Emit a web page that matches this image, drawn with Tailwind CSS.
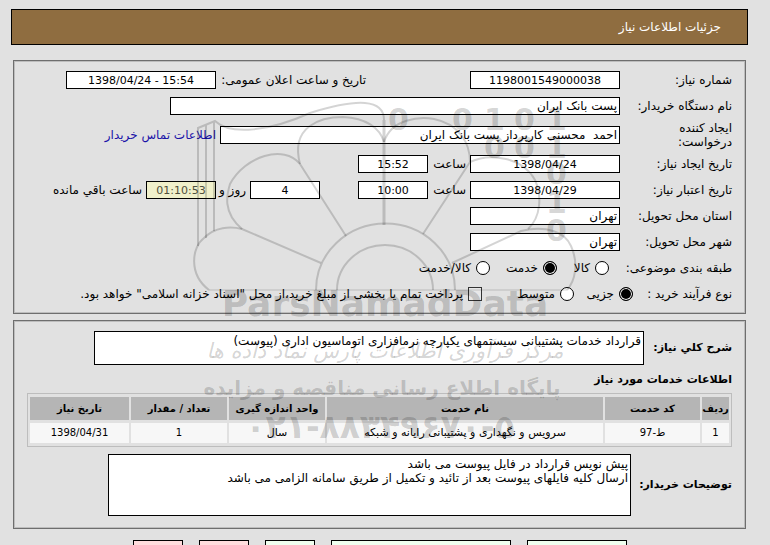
<!DOCTYPE html>
<html lang="fa" dir="rtl">
<head>
    <meta charset="UTF-8">
    <meta name="viewport" content="width=device-width, initial-scale=1.0">
    <title>جزئیات اطلاعات نیاز</title>
    <script src="https://cdn.jsdelivr.net/npm/@tailwindcss/browser@4"></script>
</head>
<body class="relative h-screen overflow-hidden bg-[#e1e1e1] pt-[9px] pr-[22px] pl-[11px] font-['DejaVu_Sans',sans-serif] text-xs leading-[14px] text-black">

    <!-- Page title -->
    <header class="flex h-9 items-center border border-black bg-[#8f6d40] px-[26px] text-white">
        <h1>جزئیات اطلاعات نیاز</h1>
    </header>

    <!-- Need details -->
    <section class="mt-[15px] mr-[2px] ml-[2px] flex flex-col gap-2 border border-[#6e6e6e] pt-[10px] pr-[13px] pb-[10px] pl-[11px] shadow-[inset_0_0_0_1px_#bdbdbd]">
        <div class="flex items-center">
            <label for="needNo" class="w-28">شماره نیاز:</label>
            <input id="needNo" class="h-[18px] w-[150px] border border-black bg-white px-1 text-center text-[11px]" value="1198001549000038">
            <label for="announced" class="mr-[104px] w-[150px] whitespace-nowrap">تاریخ و ساعت اعلان عمومی:</label>
            <input id="announced" dir="ltr" class="h-[18px] w-[150px] border border-black bg-white px-1 text-center text-[11px]" value="1398/04/24 - 15:54">
        </div>
        <div class="flex items-center">
            <label for="buyer" class="w-28">نام دستگاه خریدار:</label>
            <input id="buyer" class="h-[18px] w-[450px] border border-black bg-white px-[2px]" value="پست بانک ایران">
        </div>
        <div class="flex h-6 items-center">
            <label for="creator" class="w-28 pl-8">ایجاد کننده درخواست:</label>
            <input id="creator" class="h-[18px] w-[400px] border border-black bg-white px-[2px]" value="احمد  محسنی کارپرداز پست بانک ایران">
            <a href="#" class="mr-1 whitespace-nowrap text-[#1a12a8]">اطلاعات تماس خریدار</a>
        </div>
        <div class="flex items-center">
            <label for="createDate" class="w-28">تاریخ ایجاد نیاز:</label>
            <input id="createDate" class="h-[18px] w-[150px] border border-black bg-white px-1 text-center text-[11px]" value="1398/04/24">
            <label for="createTime" class="mr-1 w-[38px]">ساعت</label>
            <input id="createTime" class="h-[18px] w-[70px] border border-black bg-white px-1 text-center text-[11px]" value="15:52">
        </div>
        <div class="flex items-center">
            <label for="validDate" class="w-28">تاریخ اعتبار نیاز:</label>
            <input id="validDate" class="h-[18px] w-[150px] border border-black bg-white px-1 text-center text-[11px]" value="1398/04/29">
            <label for="validTime" class="mr-1 w-[38px]">ساعت</label>
            <input id="validTime" class="h-[18px] w-[70px] border border-black bg-white px-1 text-center text-[11px]" value="10:00">
            <input id="days" class="mr-[38px] h-[18px] w-[70px] border border-black bg-white px-1 text-center text-[11px]" value="4">
            <label for="days" class="mr-1 w-[30px] whitespace-nowrap">روز و</label>
            <input id="remaining" class="h-[18px] w-[70px] border border-black bg-[#f0f0cb] px-1 text-center text-[11px] text-[#4f4f3c]" value="01:10:53">
            <label for="remaining" class="mr-1 whitespace-nowrap">ساعت باقي مانده</label>
        </div>
        <div class="flex items-center">
            <label for="province" class="w-28">استان محل تحویل:</label>
            <input id="province" class="h-[18px] w-[150px] border border-black bg-white px-[2px]" value="تهران">
        </div>
        <div class="flex items-center">
            <label for="city" class="w-28">شهر محل تحویل:</label>
            <input id="city" class="h-[18px] w-[150px] border border-black bg-white px-[2px]" value="تهران">
        </div>
        <div class="flex h-[18px] items-center whitespace-nowrap">
            <span class="w-[123px]">طبقه بندی موضوعی:</span>
            <label class="flex w-[52px] items-center gap-[5px]">
                <input type="radio" name="subject" class="size-[14px] shrink-0 appearance-none rounded-full border border-black bg-white checked:bg-black checked:shadow-[inset_0_0_0_1px_white]">کالا
            </label>
            <label class="flex w-[67px] items-center gap-[5px]">
                <input type="radio" name="subject" checked class="size-[14px] shrink-0 appearance-none rounded-full border border-black bg-white checked:bg-black checked:shadow-[inset_0_0_0_1px_white]">خدمت
            </label>
            <label class="flex items-center gap-[5px]">
                <input type="radio" name="subject" class="size-[14px] shrink-0 appearance-none rounded-full border border-black bg-white checked:bg-black checked:shadow-[inset_0_0_0_1px_white]">کالا/خدمت
            </label>
        </div>
        <div class="flex h-[18px] items-center whitespace-nowrap">
            <span class="w-[99px]">نوع فرآیند خرید :</span>
            <label class="flex w-[59px] items-center gap-[5px]">
                <input type="radio" name="process" checked class="size-[14px] shrink-0 appearance-none rounded-full border border-black bg-white checked:bg-black checked:shadow-[inset_0_0_0_1px_white]">جزیی
            </label>
            <label class="flex w-[92px] items-center gap-[5px]">
                <input type="radio" name="process" class="size-[14px] shrink-0 appearance-none rounded-full border border-black bg-white checked:bg-black checked:shadow-[inset_0_0_0_1px_white]">متوسط
            </label>
            <label class="flex items-center gap-[5px]">
                <input type="checkbox" class="size-[14px] shrink-0 appearance-none border border-[#333] bg-[#e8e8e8]">پرداخت تمام یا بخشی از مبلغ خرید،از محل "اسناد خزانه اسلامی" خواهد بود.
            </label>
        </div>
    </section>

    <!-- Requested services -->
    <section class="mt-[6px] mr-[2px] ml-[2px] border border-[#6e6e6e] pt-[10px] pr-[13px] pb-3 pl-[13px] shadow-[inset_0_0_0_1px_#bdbdbd]">
        <div class="flex items-center">
            <label for="summary" class="w-[88px] text-[11px] font-bold whitespace-nowrap">شرح كلي نیاز:</label>
            <textarea id="summary" class="h-[34px] w-[550px] resize-none overflow-hidden border border-black bg-white p-[2px]">قرارداد خدمات پشتیبانی سیستمهای یکپارچه نرمافزاری اتوماسیون اداری (پیوست)</textarea>
        </div>
        <h2 class="mt-2 mb-[6px] text-[11px] leading-[14px] font-bold">اطلاعات خدمات مورد نیاز</h2>
        <table class="w-full table-fixed border-separate border-spacing-x-[2px] border-spacing-y-[3px] border border-[#bdbdbd] text-center">
            <thead>
                <tr class="h-[23px] bg-[#b5b5b5] text-[10px] font-bold">
                    <th class="w-[27px]">ردیف</th>
                    <th class="w-[95px]">کد خدمت</th>
                    <th>نام خدمت</th>
                    <th class="w-24">واحد اندازه گیری</th>
                    <th class="w-24">تعداد / مقدار</th>
                    <th class="w-[99px]">تاریخ نیاز</th>
                </tr>
            </thead>
            <tbody>
                <tr class="h-5 bg-[#f7f7f7] text-[10px]">
                    <td>1</td>
                    <td>ط-97</td>
                    <td class="text-[11px]">سرویس و نگهداری و پشتیبانی رایانه و شبکه</td>
                    <td class="text-[11px]">سال</td>
                    <td>1</td>
                    <td>1398/04/31</td>
                </tr>
            </tbody>
        </table>
        <div class="mt-[7px] flex items-center">
            <label for="notes" class="w-[101px] text-[11px] font-bold whitespace-nowrap">توضیحات خریدار:</label>
            <textarea id="notes" class="h-[62px] w-[523px] resize-none overflow-hidden border border-black bg-white p-[2px]">پیش نویس قرارداد در فایل پیوست می باشد
ارسال کلیه فایلهای پیوست بعد از تائید و تکمیل از طریق سامانه الزامی می باشد</textarea>
        </div>
    </section>

    <!-- Actions -->
    <div class="mt-[11px] mr-[121px] flex gap-4">
        <button type="button" class="h-6 w-[100px] border border-black bg-[#efffef]"></button>
        <button type="button" class="h-6 w-[180px] border border-black bg-[#efffef]"></button>
        <button type="button" class="h-6 w-[50px] border border-black bg-[#efffef]"></button>
        <button type="button" class="h-6 w-[50px] border border-black bg-[#ffdddd]"></button>
        <button type="button" class="h-6 w-[50px] border border-black bg-[#ffdddd]"></button>
    </div>

    <!-- Watermark -->
    <svg class="pointer-events-none absolute top-0 left-0 h-[545px] w-[770px]" viewBox="0 0 770 545" fill="none" direction="ltr">
        <g stroke="#000" stroke-opacity=".17" stroke-width="2">
            <path d="M316 290A69 66 0 0 1 455 290M337 290A48 45 0 0 1 433 290"/>
            <path d="M209 290C188 274 192 247 204 238C215 227 230 226 242 229L321 263"/>
            <path d="M242 229C222 212 227 194 230 184C245 156 284 144 300 164L346 236"/>
            <path d="M300 164C290 126 321 117 343 117C366 118 380 128 384 142"/>
            <path d="M384 142C391 119 420 116 434 119C459 124 470 143 470 162L423 234"/>
            <path d="M470 162C491 152 523 158 535 180C542 196 541 217 528 229"/>
            <path d="M452 263L521 231C546 225 565 232 571 246C579 264 575 281 567 290"/>
            <path d="M198 246V128L215 121C231 136 270 131 310 113C358 98 384 99 384 120M206 238V125M214 231V122"/>
            <path stroke-width="3" d="M384 120V225"/>
            <path stroke-width="1" d="M209 290H567"/>
        </g>
        <g fill="#000" fill-opacity=".18" font-family="DejaVu Sans, sans-serif" font-weight="bold">
            <g font-size="30">
                <text x="388" y="130">0</text>
                <text x="452" y="130">0</text>
                <text x="484" y="130">1</text>
                <text x="514" y="130">0</text>
                <text x="546" y="130">1</text>
                <text x="484" y="158">0</text>
                <text x="514" y="158">0</text>
                <text x="546" y="158">1</text>
                <text x="546" y="184">0</text>
                <text x="546" y="213">1</text>
                <text x="546" y="241">0</text>
            </g>
            <text x="385" y="316" font-size="36" text-anchor="middle">ParsNamadData</text>
            <text x="382" y="395" font-size="20" text-anchor="middle" direction="rtl">پایگاه اطلاع رسانی مناقصه و مزایده</text>
            <text x="380" y="438" font-size="33" text-anchor="middle" direction="ltr">۰۲۱-۸۸۳۴۹۶۷۰-۵</text>
        </g>
        <text x="385" y="358" font-size="21" text-anchor="middle" direction="rtl" fill="#000" fill-opacity=".18" font-family="DejaVu Sans, sans-serif" font-style="italic">مرکز فرآوری اطلاعات پارس نماد داده ها</text>
    </svg>
</body>
</html>
